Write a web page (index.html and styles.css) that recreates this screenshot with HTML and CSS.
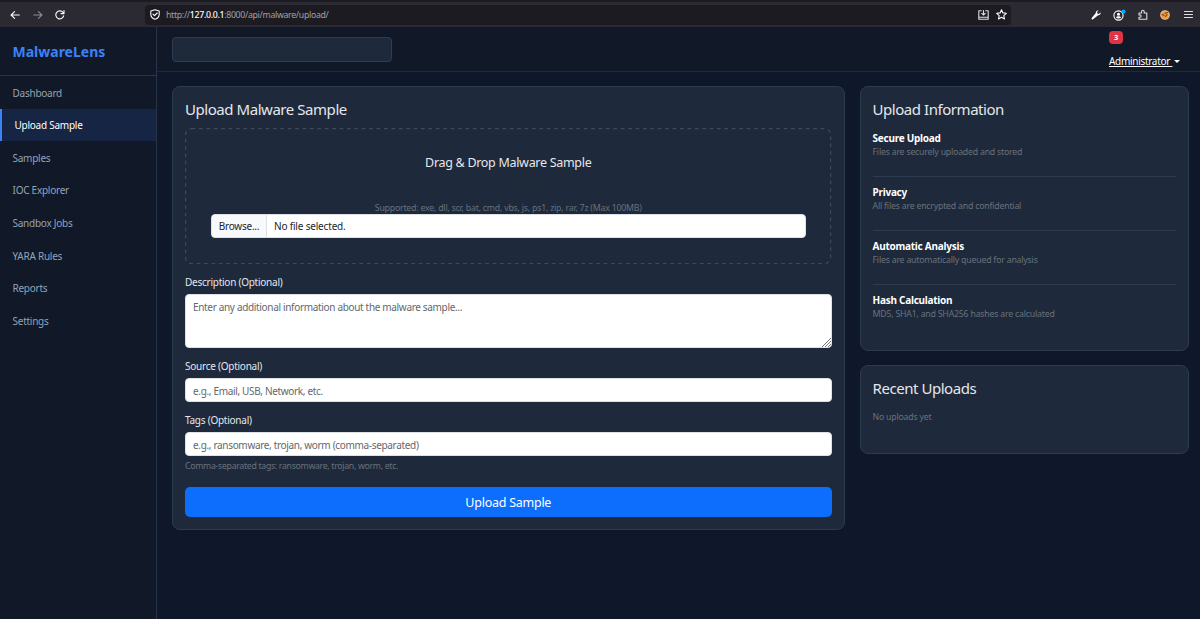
FILE: index.html
```
<!DOCTYPE html>
<html lang="en">
<head>
	<meta charset="UTF-8">
	<meta name="viewport" content="width=device-width, initial-scale=1.0">
	<title>Upload Sample - MalwareLens</title>
	<link rel="stylesheet" href="styles.css">
</head>
<body>

	<div class="browser">
		<div class="nav-buttons">
			<svg width="10" height="10" viewBox="0 0 10 10"><path d="M9.3 5H1M4.6 1.6L1.1 5l3.5 3.4"/></svg>
			<svg class="disabled" width="10" height="10" viewBox="0 0 10 10"><path d="M.7 5H9M5.4 1.6L8.9 5 5.4 8.4"/></svg>
			<svg width="10" height="10" viewBox="0 0 10 10"><path d="M8.700 5.900A4 4 0 1 1 8 2.400M9 .6v3H6"/></svg>
		</div>
		<div class="url-bar">
			<svg width="10" height="11" viewBox="0 0 10 11"><path d="M5 .7l4.200 1.400v3.100C9.200 7.700 7.600 9.500 5 10.300 2.400 9.500.8 7.700.8 5.200V2.100z"/><path d="M3 5.200l1.500 1.500L7.200 4"/></svg>
			<span class="url">http://<b>127.0.0.1</b>:8000/api/malware/upload/</span>
			<svg class="install" width="11" height="10" viewBox="0 0 11 10"><path d="M3.300.8H.8v8.500h9.400V.8H7.700M.8 7.200h9.400M5.500.5v4.300M3.800 3.300l1.700 1.700 1.700-1.700"/></svg>
			<svg width="11" height="11" viewBox="0 0 11 11"><path d="M5.500.8l1.400 3.100 3.400.4-2.500 2.300.7 3.400-3-1.700-3 1.700.7-3.400L.7 4.300l3.400-.4z"/></svg>
		</div>
		<div class="tools">
			<svg width="10" height="10" viewBox="0 0 10 10"><path class="solid" d="M9.500 2.300L7.900 3.900 6.400 3.600 6.100 2.100 7.600.5C6 .1 4.600 1.100 4.800 2.900L.7 7.900c-.6 1 .4 2 1.400 1.400L7.100 5.200C8.900 5.400 10 4 9.500 2.300z"/></svg>
			<svg width="13" height="12" viewBox="0 0 13 12"><circle cx="5.500" cy="6.500" r="4.600"/><circle class="solid" cx="5.500" cy="5.300" r="1.500"/><path class="solid" d="M3 8.700c.5-1.900 4.500-1.900 5 0-1.500 1-3.500 1-5 0z"/><circle class="dot" cx="10.500" cy="2.400" r="2"/></svg>
			<svg class="puzzle" width="10" height="11" viewBox="0 0 10 11"><path d="M1 4h2.600V2.500a1.300 1.300 0 0 1 2.600 0V4h2.600v6.200H1V8.300h1.200a1.200 1.200 0 0 0 0-2.300H1z"/></svg>
			<svg width="10" height="10" viewBox="0 0 10 10"><circle class="fox" cx="5" cy="5" r="4.300"/><path class="fox-eye" d="M2 4.500l2 .8M5 3.200l2.500-.7M5.500 6.500l1.500-1.800"/></svg>
			<svg class="lines" width="9" height="9" viewBox="0 0 9 9"><path d="M.5 1.500h8M.5 4.500h8M.5 7.500h8"/></svg>
		</div>
	</div>

	<div class="app">
		<div class="sidebar">
			<div class="brand">MalwareLens</div>
			<ul class="menu">
				<li><a href="#">Dashboard</a></li>
				<li class="active"><a href="#">Upload Sample</a></li>
				<li><a href="#">Samples</a></li>
				<li><a href="#">IOC Explorer</a></li>
				<li><a href="#">Sandbox Jobs</a></li>
				<li><a href="#">YARA Rules</a></li>
				<li><a href="#">Reports</a></li>
				<li><a href="#">Settings</a></li>
			</ul>
		</div>

		<div class="main">
			<div class="topbar">
				<input class="search" type="text" placeholder="Search Samples, Hashes, IOCs...">
				<div class="user">
					<span class="badge">3</span>
					<a class="dropdown" href="#"><span>Administrator&nbsp;</span></a>
				</div>
			</div>

			<div class="content">
				<div class="card upload">
					<h4>Upload Malware Sample</h4>
					<form>
						<div class="drop-zone">
							<svg class="dashes"><rect x=".6" y=".6" width="645" height="135" rx="6"/></svg>
							<h5>Drag &amp; Drop Malware Sample</h5>
							<p>or click to select file</p>
							<small>Supported: exe, dll, scr, bat, cmd, vbs, js, ps1, zip, rar, 7z (Max 100MB)</small>
							<div class="file-input">
								<span class="browse">Browse...</span>
								<span class="file-name">No file selected.</span>
							</div>
						</div>
						<label for="description">Description (Optional)</label>
						<div class="textarea-wrap">
							<textarea id="description" placeholder="Enter any additional information about the malware sample..."></textarea>
							<svg class="grip" width="9" height="9" viewBox="0 0 9 9"><path d="M0 9L9 0M3 9l6-6M6 9l3-3"/></svg>
						</div>
						<label for="source">Source (Optional)</label>
						<input id="source" class="field" type="text" placeholder="e.g., Email, USB, Network, etc.">
						<label for="tags">Tags (Optional)</label>
						<input id="tags" class="field" type="text" placeholder="e.g., ransomware, trojan, worm (comma-separated)">
						<small class="hint">Comma-separated tags: ransomware, trojan, worm, etc.</small>
						<button class="submit" type="button">Upload Sample</button>
					</form>
				</div>

				<div class="side">
					<div class="card info">
						<h4>Upload Information</h4>
						<div class="info-item">
							<strong>Secure Upload</strong>
							<p>Files are securely uploaded and stored</p>
						</div>
						<div class="info-item">
							<strong>Privacy</strong>
							<p>All files are encrypted and confidential</p>
						</div>
						<div class="info-item">
							<strong>Automatic Analysis</strong>
							<p>Files are automatically queued for analysis</p>
						</div>
						<div class="info-item">
							<strong>Hash Calculation</strong>
							<p>MD5, SHA1, and SHA256 hashes are calculated</p>
						</div>
					</div>
					<div class="card recent">
						<h4>Recent Uploads</h4>
						<p>No uploads yet</p>
					</div>
				</div>
			</div>
		</div>
	</div>

</body>
</html>
```
FILE: styles.css
```
*{
	box-sizing:border-box;
}
body{
	margin:0;
	height:619px;
	display:flex;
	flex-direction:column;
	overflow:hidden;
	background:#0f172a;
	color:#e5e7eb;
	font:10px/15px "Noto Sans", "Open Sans", sans-serif;
	letter-spacing:-.25px;
}
h4, h5, p, ul{
	margin:0;
	padding:0;
	font-weight:normal;
}
input, textarea, button{
	font:inherit;
	letter-spacing:inherit;
}

/* browser toolbar */
.browser{
	height:27px;
	flex:none;
	display:flex;
	align-items:center;
	padding:0 7px 0 10px;
	border-top:2px solid #1c1b22;
	background:#2b2a33;
}
.browser svg{
	display:block;
	fill:none;
	stroke:#fbfbfe;
	stroke-width:1.1;
	stroke-linecap:round;
	stroke-linejoin:round;
}
.browser svg.disabled{
	stroke:#8b8a92;
}
.browser .install, .browser .puzzle, .browser .lines{
	stroke:#dedee3;
	stroke-width:1.1;
}
.browser .solid{
	fill:#fbfbfe;
	stroke:none;
}
.browser .dot{
	fill:#00a8f0;
	stroke:none;
}
.browser .fox{
	fill:#f39a2d;
	stroke:#d8c3a5;
}
.browser .fox-eye{
	stroke:#7b3d10;
}
.nav-buttons{
	width:135px;
	display:flex;
	gap:12.500px;
}
.url-bar{
	width:866px;
	height:20px;
	display:flex;
	align-items:center;
	padding:0 4px 0 5px;
	border-radius:4px;
	background:#1c1b22;
}
.url{
	flex:1;
	margin:1px 0 0 6px;
	color:#a0a0a6;
	font-size:8.750px;
	letter-spacing:-.31px;
}
.url b{
	color:#fbfbfe;
	font-weight:500;
}
.install{
	margin-right:7px;
}
.tools{
	flex:1;
	display:flex;
	align-items:center;
	justify-content:space-between;
	padding-left:80px;
}
.tools svg:nth-child(n+2):nth-child(-n+4){
	margin-left:-2px;
}
.tools .puzzle{
	margin-right:1px;
}

.app{
	flex:1;
	display:flex;
}
.sidebar{
	width:157px;
	flex:none;
	border-right:1px solid #283548;
	background:#111827;
}
.brand{
	height:49px;
	padding:15px 12.500px 0;
	border-bottom:1px solid #283548;
	color:#3b82f6;
	font-size:14px;
	line-height:20px;
	font-weight:bold;
	letter-spacing:0;
}
.menu{
	list-style:none;
}
.menu a{
	display:block;
	height:32.600px;
	padding:9.600px 12.500px 0;
	color:#94a3b8;
	text-decoration:none;
}
.menu .active a{
	border-left:2.500px solid #3b82f6;
	background:#172544;
	color:#fff;
}

.main{
	flex:1;
}
.topbar{
	height:45px;
	display:flex;
	justify-content:space-between;
	padding:10px 20px 0 15px;
	border-bottom:1px solid #1f2937;
	background:#111827;
}
.search{
	width:220px;
	height:25px;
	padding:0 8px;
	border:1px solid #2f3d50;
	border-radius:4px;
	background:#1e293b;
}
.search::placeholder{
	color:#212c38;
}
.user{
	width:71px;
	margin-top:-6px;
}
.badge{
	display:block;
	width:14px;
	height:13px;
	border-radius:4px;
	background:#dc3545;
	color:#fff;
	font-size:7.500px;
	line-height:13px;
	font-weight:bold;
	text-align:center;
}
.dropdown{
	display:flex;
	align-items:center;
	margin-top:10px;
	color:#fff;
	letter-spacing:-.3px;
	text-decoration:none;
}
.dropdown span{
	text-decoration:underline;
}
.dropdown::after{
	content:"";
	margin-left:2px;
	border:3px solid transparent;
	border-top-color:#fff;
	border-bottom:0;
}

.content{
	display:flex;
	align-items:flex-start;
	gap:15px;
	padding:14px 11px 0 15px;
}
.card{
	padding:13px 12px 0;
	border:1px solid #2d3b4f;
	border-radius:8px;
	background:#1e293b;
}
.card h4{
	font-size:15px;
	line-height:18px;
	letter-spacing:-.45px;
}
.upload{
	width:672.500px;
	height:444px;
}
.drop-zone{
	position:relative;
	height:136px;
	margin-top:10px;
	padding:27px 26px 0;
	text-align:center;
}
.dashes{
	position:absolute;
	top:0;
	left:0;
	width:100%;
	height:100%;
	fill:none;
	stroke:#3c4a5e;
	stroke-width:1.2;
	stroke-dasharray:3.700 3.700;
}
.drop-zone h5{
	font-size:12.500px;
	line-height:15px;
	letter-spacing:-.3px;
}
.drop-zone p{
	margin:5px 0 12px;
	color:#212c38;
}
.drop-zone small{
	display:block;
	line-height:12px;
}
small, .info-item p, .recent p{
	color:#68727c;
	font-size:8.750px;
	letter-spacing:-.21px;
}
.file-input{
	height:24px;
	display:flex;
	border:1px solid #dee2e6;
	border-radius:4px;
	overflow:hidden;
	background:#fff;
	color:#212529;
	line-height:22px;
}
.browse{
	width:55px;
	border-right:1px solid #dee2e6;
	background:#f8f9fa;
}
.file-name{
	padding-left:7px;
	letter-spacing:-.18px;
}
label{
	display:block;
	margin:11px 0 4px;
}
.field, textarea{
	display:block;
	width:100%;
	height:24px;
	padding:4px 7px 2px;
	border:1px solid #dee2e6;
	border-radius:4px;
	background:#fff;
	color:#212529;
	letter-spacing:-.33px;
}
.field::placeholder, textarea::placeholder{
	color:#63686d;
	opacity:1;
}
.textarea-wrap{
	position:relative;
}
textarea{
	height:54px;
	padding-top:5px;
	resize:none;
}
.grip{
	position:absolute;
	right:1px;
	bottom:1px;
	fill:none;
	stroke:#777;
}
.hint{
	display:block;
	margin-top:3px;
	letter-spacing:-.31px;
}
.submit{
	width:100%;
	height:30px;
	margin-top:13px;
	padding:0;
	border:0;
	border-radius:5px;
	background:#0d6efd;
	color:#fff;
	font-size:12.500px;
}

.side{
	flex:1;
}
.info{
	height:265px;
	margin-bottom:14px;
}
.info-item{
	height:54px;
	padding-top:8px;
	border-bottom:1px solid #2d3b4f;
	line-height:14px;
}
.info h4 + .info-item{
	padding-top:13px;
	height:59px;
}
.info-item:last-child{
	border-bottom:0;
}
.info-item strong{
	display:block;
	color:#fff;
}
.recent{
	height:89px;
}
.recent p{
	margin-top:13px;
}
```
